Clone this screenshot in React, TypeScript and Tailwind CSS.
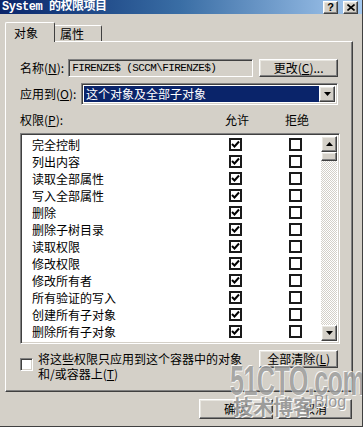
import React from "react";

const cjk = "font-['SimSun','Noto_Sans_CJK_SC',sans-serif]";

const raised =
  "border border-t-white border-l-white border-r-[#404040] border-b-[#404040] shadow-[inset_-1px_-1px_0_#808080,inset_1px_1px_0_#e8e6e0] bg-[#d4d0c8]";
const sunken =
  "border border-t-[#808080] border-l-[#808080] border-r-white border-b-white shadow-[inset_1px_1px_0_#404040,inset_-1px_-1px_0_#d4d0c8]";

const perms = [
  "完全控制",
  "列出内容",
  "读取全部属性",
  "写入全部属性",
  "删除",
  "删除子树目录",
  "读取权限",
  "修改权限",
  "修改所有者",
  "所有验证的写入",
  "创建所有子对象",
  "删除所有子对象",
];

const Box = ({ checked }: { checked?: boolean }) => (
  <div className="w-[13px] h-[13px] border-2 border-[#1a1a1a] bg-white flex items-center justify-center shrink-0">
    {checked && (
      <svg width="9" height="9" viewBox="0 0 9 9">
        <path d="M1 4 L3.5 6.5 L8 1.5" fill="none" stroke="#000" strokeWidth="2" />
      </svg>
    )}
  </div>
);

const Arrow = ({ up }: { up?: boolean }) => (
  <svg width="7" height="4" viewBox="0 0 7 4">
    <path d={up ? "M0 4 L3.5 0 L7 4 Z" : "M0 0 L7 0 L3.5 4 Z"} fill="#000" />
  </svg>
);

export default function App() {
  return (
    <div
      className={`relative w-[363px] h-[427px] overflow-hidden bg-[#d4d0c8] text-[12px] text-black border-r border-b border-[#404040] ${cjk}`}
    >
      {/* title bar */}
      <div className="h-[14px] flex items-center justify-between pl-[2px] pr-[4px] bg-gradient-to-r from-[#0a246a] via-[#3a6ea5] to-[#a6caf0]">
        <span className="text-white font-bold text-[12px] leading-none font-['Liberation_Mono','Noto_Sans_CJK_SC',monospace] tracking-[-0.5px]">
          System 的权限项目
        </span>
        <div className="flex gap-[5px]">
          <div className={`w-[15px] h-[13px] ${raised} flex items-center justify-center text-[11px] font-bold leading-none font-['Liberation_Sans',sans-serif]`}>
            ?
          </div>
          <div className={`w-[15px] h-[13px] ${raised} flex items-center justify-center`}>
            <svg width="8" height="7" viewBox="0 0 8 7">
              <path d="M0.5 0.5 L7.5 6.5 M7.5 0.5 L0.5 6.5" stroke="#000" strokeWidth="1.6" />
            </svg>
          </div>
        </div>
      </div>

      {/* tabs */}
      <div className="flex items-end ml-[5px] mt-[8px] h-[19px] relative z-10">
        <div className="w-[50px] h-[20px] bg-[#d4d0c8] border-t border-l border-white border-r border-r-[#404040] rounded-t-[2px] flex items-center pl-[8px] -mb-[1px]">
          对象
        </div>
        <div className="w-[47px] h-[16px] bg-[#d4d0c8] border-t border-white border-r border-r-[#404040] rounded-tr-[2px] flex items-center pl-[5px]">
          属性
        </div>
      </div>

      {/* panel */}
      <div className="ml-[5px] w-[348px] h-[351px] border border-t-white border-l-white border-r-[#404040] border-b-[#404040] shadow-[inset_-1px_-1px_0_#808080] px-[14px] pt-[17px]">
        <div className="flex items-center h-[18px]">
          <span className="w-[49px]">
            名称(<u>N</u>):
          </span>
          <div className={`w-[188px] h-[18px] ${sunken} flex items-center pl-[3px] font-['Liberation_Mono',monospace] text-[11px] tracking-[-0.6px]`}>
            FIRENZE$ (SCCM\FIRENZE$)
          </div>
          <div className={`ml-[6px] w-[80px] h-[18px] ${raised} flex items-center justify-center`}>
            更改(<u>C</u>)...
          </div>
        </div>

        <div className="flex items-center h-[22px] mt-[6px]">
          <span className="w-[61px]">
            应用到(<u>O</u>):
          </span>
          <div className={`w-[257px] h-[22px] ${sunken} bg-white flex items-center p-[2px]`}>
            <div className="flex-1 h-full bg-[#0a246a] text-white flex items-center pl-[2px]">这个对象及全部子对象</div>
            <div className={`w-[16px] h-full ${raised} flex items-center justify-center`}>
              <Arrow />
            </div>
          </div>
        </div>

        <div className="flex items-center h-[16px] mt-[7px]">
          <span className="w-[204px]">
            权限(<u>P</u>):
          </span>
          <span className="w-[26px] text-center">允许</span>
          <span className="w-[26px] text-center ml-[34px]">拒绝</span>
        </div>

        <div className={`mt-[5px] w-[320px] h-[211px] ${sunken} bg-white flex`}>
          <div className="flex-1 pt-[2px]">
            {perms.map((p) => (
              <div key={p} className="h-[17px] flex items-center pl-[11px]">
                <span className="w-[197px]">{p}</span>
                <Box checked />
                <div className="ml-[47px]">
                  <Box />
                </div>
              </div>
            ))}
          </div>
          <div className="w-[16px] my-[2px] mr-[2px] flex flex-col bg-[repeating-conic-gradient(#d4d0c8_0_25%,#ffffff_0_50%)] bg-size-[2px_2px]">
            <div className={`h-[16px] ${raised} flex items-center justify-center`}>
              <Arrow up />
            </div>
            <div className={`h-[9px] ${raised}`} />
            <div className="flex-1" />
            <div className={`h-[16px] ${raised} flex items-center justify-center`}>
              <Arrow />
            </div>
          </div>
        </div>

        <div className="flex items-start mt-[6px]">
          <div className="mt-[8px]">
            <div className={`w-[13px] h-[13px] bg-white ${sunken}`} />
          </div>
          <div className="ml-[5px] w-[225px] leading-[15px] pt-[1px]">
            <div>将这些权限只应用到这个容器中的对象</div>
            <div>
              和/或容器上(<u>T</u>)
            </div>
          </div>
          <div className={`w-[80px] h-[18px] ${raised} flex items-center justify-center`}>
            全部清除(<u>L</u>)
          </div>
        </div>
      </div>

      {/* dialog buttons */}
      <div className="flex ml-[199px] mt-[7px] gap-[5px]">
        <div className={`w-[74px] h-[20px] ${raised} flex items-center justify-center`}>确定</div>
        <div className={`w-[74px] h-[20px] ${raised} flex items-center justify-center`}>取消</div>
      </div>

      {/* watermark */}
      <div className="absolute left-[230px] top-[360px] origin-left scale-x-[0.6] text-[42px] leading-none font-bold text-[#a0a0a0] opacity-85 font-['Liberation_Sans',sans-serif] tracking-[-1px] [text-shadow:1px_1px_0_#fff,-1px_-1px_0_#fff]">
        51CTO.com
      </div>
      <div className="absolute left-[233px] top-[397px] text-[20px] leading-none font-bold text-[#939393] opacity-85 [text-shadow:1px_1px_0_#fff,-1px_-1px_0_#fff]">
        技术博客
      </div>
      <div className="absolute left-[314px] top-[394px] text-[16px] leading-none text-[#9a9a9a] font-['Liberation_Sans',sans-serif] [text-shadow:1px_1px_0_#fff]">
        Blog
      </div>
    </div>
  );
}
